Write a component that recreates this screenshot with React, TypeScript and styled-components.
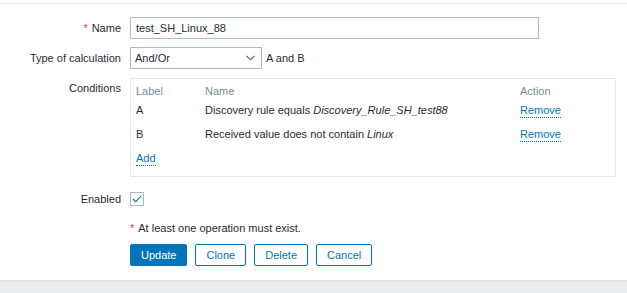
import React from "react";
import styled, { createGlobalStyle } from "styled-components";

const GlobalStyle = createGlobalStyle`
  html, body {
    margin: 0;
    padding: 0;
    background: #ffffff;
  }
  body {
    font-family: "Liberation Sans", Arial, sans-serif;
    font-size: 11px;
    color: #1f2c33;
  }
`;

const Page = styled.div`
  width: 627px;
  height: 293px;
  display: flex;
  flex-direction: column;
  overflow: hidden;
`;

const TopRule = styled.div`
  height: 3px;
  border-bottom: 1px solid #e6e9eb;
`;

const Form = styled.form`
  display: flex;
  flex-direction: column;
  padding-top: 13px;
`;

const Row = styled.div<{ $mt?: number; $top?: boolean }>`
  display: grid;
  grid-template-columns: 121px 1fr;
  column-gap: 9px;
  align-items: ${(p) => (p.$top ? "start" : "center")};
  margin-top: ${(p) => p.$mt ?? 0}px;
`;

const Label = styled.label<{ $pt?: number }>`
  text-align: right;
  line-height: 14px;
  padding-top: ${(p) => p.$pt ?? 0}px;
  white-space: nowrap;
`;

const Asterisk = styled.span`
  color: #e33734;
  margin-right: 4px;
`;

const Field = styled.div`
  display: flex;
  align-items: center;
  gap: 4px;
`;

const TextInput = styled.input`
  box-sizing: border-box;
  width: 409px;
  height: 22px;
  border: 1px solid #acbbc2;
  padding: 0 5px;
  font-family: inherit;
  font-size: 11px;
  color: #1f2c33;
  outline: none;
  background: #fff;
`;

const Select = styled.div`
  box-sizing: border-box;
  width: 132px;
  height: 22px;
  border: 1px solid #acbbc2;
  padding: 0 6px 0 4px;
  display: flex;
  align-items: center;
  justify-content: space-between;
  background: #fff;
`;

const Conditions = styled.div`
  box-sizing: border-box;
  width: 486px;
  height: 99px;
  border: 1px solid #e3e7ea;
  padding: 4px 5px 6px 5px;
`;

const CondGrid = styled.div`
  display: grid;
  grid-template-columns: 69px 315px 1fr;
  grid-template-rows: 15px 24px 24px 24px;
  align-items: center;
`;

const Head = styled.div`
  color: #768d99;
  line-height: 14px;
`;

const Cell = styled.div`
  line-height: 14px;
  white-space: nowrap;
`;

const Link = styled.a`
  color: #0275b8;
  text-decoration: none;
  border-bottom: 1px dotted #0275b8;
  cursor: pointer;
  line-height: 13px;
  display: inline-block;
`;

const CheckBox = styled.span`
  box-sizing: border-box;
  width: 14px;
  height: 14px;
  border: 1px solid #acbbc2;
  display: flex;
  align-items: center;
  justify-content: center;
  background: #fff;
`;

const Note = styled.div`
  line-height: 14px;
`;

const Buttons = styled.div`
  display: flex;
  gap: 8px;
`;

const Button = styled.button<{ $primary?: boolean }>`
  height: 22px;
  padding: 0 10px;
  border-radius: 2px;
  font-family: inherit;
  font-size: 11px;
  cursor: pointer;
  border: 1px solid #0275b8;
  background: ${(p) => (p.$primary ? "#0275b8" : "#ffffff")};
  color: ${(p) => (p.$primary ? "#ffffff" : "#0275b8")};
`;

const Footer = styled.div`
  margin-top: 14px;
  flex: 1;
  background: #ebeef0;
  border-top: 2px solid #dfe4e7;
`;

const conditions = [
  { label: "A", text: "Discovery rule equals ", value: "Discovery_Rule_SH_test88" },
  { label: "B", text: "Received value does not contain ", value: "Linux" },
];

export default function App() {
  return (
    <Page>
      <GlobalStyle />
      <TopRule />
      <Form>
        <Row>
          <Label>
            <Asterisk>*</Asterisk>Name
          </Label>
          <Field>
            <TextInput defaultValue="test_SH_Linux_88" />
          </Field>
        </Row>

        <Row $mt={8}>
          <Label>Type of calculation</Label>
          <Field>
            <Select>
              <span>And/Or</span>
              <svg width="9" height="6" viewBox="0 0 9 6">
                <polyline points="0.5,0.8 4.5,4.8 8.5,0.8" fill="none" stroke="#4f5b61" strokeWidth="1.1" />
              </svg>
            </Select>
            <span>A and B</span>
          </Field>
        </Row>

        <Row $mt={9} $top>
          <Label $pt={3}>Conditions</Label>
          <Conditions>
            <CondGrid>
              <Head>Label</Head>
              <Head>Name</Head>
              <Head>Action</Head>
              {conditions.map((c) => (
                <React.Fragment key={c.label}>
                  <Cell>{c.label}</Cell>
                  <Cell>
                    {c.text}
                    <i>{c.value}</i>
                  </Cell>
                  <Cell>
                    <Link>Remove</Link>
                  </Cell>
                </React.Fragment>
              ))}
              <Cell>
                <Link>Add</Link>
              </Cell>
            </CondGrid>
          </Conditions>
        </Row>

        <Row $mt={15}>
          <Label>Enabled</Label>
          <Field>
            <CheckBox>
              <svg width="10" height="8" viewBox="0 0 10 8">
                <polyline points="1,4 3.8,6.6 9,1" fill="none" stroke="#0275b8" strokeWidth="1.1" />
              </svg>
            </CheckBox>
          </Field>
        </Row>

        <Row $mt={15}>
          <span />
          <Note>
            <Asterisk>*</Asterisk>At least one operation must exist.
          </Note>
        </Row>

        <Row $mt={9}>
          <span />
          <Buttons>
            <Button type="button" $primary>
              Update
            </Button>
            <Button type="button">Clone</Button>
            <Button type="button">Delete</Button>
            <Button type="button">Cancel</Button>
          </Buttons>
        </Row>
      </Form>
      <Footer />
    </Page>
  );
}
